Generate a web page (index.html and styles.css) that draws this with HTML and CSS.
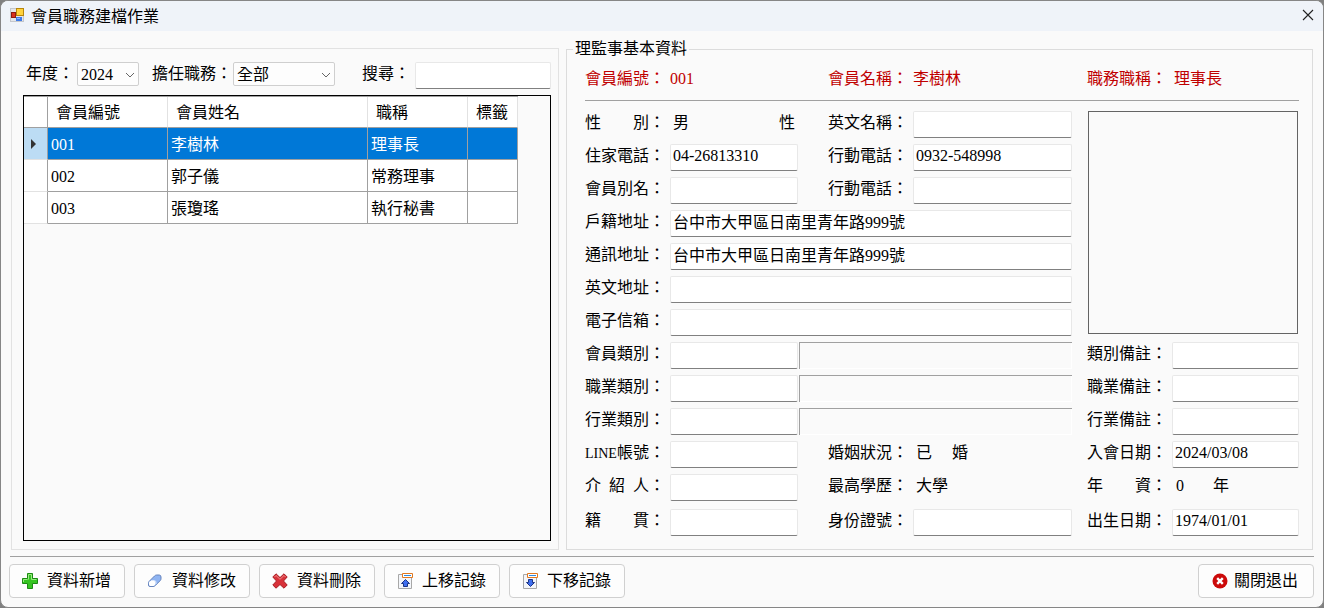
FILE: index.html
```html
<!DOCTYPE html>
<html lang="zh-Hant">
<head>
<meta charset="utf-8">
<title>會員職務建檔作業</title>
<link rel="stylesheet" href="styles.css">
</head>
<body>
<div class="window">
  <header class="titlebar">
    <svg class="app-icon" width="15" height="16" viewBox="0 0 15 16" aria-hidden="true">
      <rect x="0.5" y="1.5" width="13" height="13" fill="#e4e6ea" stroke="#c4c7cc"/>
      <rect x="6.5" y="1.5" width="7" height="7" fill="#ffd23c" stroke="#b8860b"/>
      <rect x="1.5" y="5.5" width="4" height="5" fill="#d8301e" stroke="#8c1c10"/>
      <rect x="6" y="10" width="6" height="4" fill="#3f7be8"/>
      <rect x="7" y="11" width="3" height="1" fill="#8fb6fa"/>
    </svg>
    <h1 class="title">會員職務建檔作業</h1>
    <button class="close" type="button" aria-label="關閉">
      <svg width="12" height="12" viewBox="0 0 12 12"><path d="M1 1l10 10M11 1L1 11" stroke="#222" stroke-width="1.1" fill="none"/></svg>
    </button>
  </header>

  <main class="main">
    <section class="list-panel">
      <div class="filters">
        <label for="year">年度：</label>
        <span class="combo combo-year">
          <select id="year"><option>2024</option></select>
          <svg width="10" height="6" viewBox="0 0 10 6"><path d="M1 1l4 4 4-4" stroke="#666" fill="none"/></svg>
        </span>
        <label for="duty">擔任職務：</label>
        <span class="combo combo-duty">
          <select id="duty"><option>全部</option></select>
          <svg width="10" height="6" viewBox="0 0 10 6"><path d="M1 1l4 4 4-4" stroke="#666" fill="none"/></svg>
        </span>
        <label for="search">搜尋：</label>
        <input class="field search" id="search" type="text">
      </div>
      <div class="grid-box">
        <table class="members">
          <colgroup><col class="c-mark"><col class="c-id"><col class="c-name"><col class="c-title"><col class="c-tag"></colgroup>
          <thead>
            <tr><td class="mark"></td><th scope="col">會員編號</th><th scope="col">會員姓名</th><th scope="col">職稱</th><th scope="col">標籤</th></tr>
          </thead>
          <tbody>
            <tr class="selected"><td class="mark"><svg width="6" height="10" viewBox="0 0 6 10"><path d="M0 0l5 5-5 5z" fill="#333"/></svg></td><td>001</td><td>李樹林</td><td>理事長</td><td></td></tr>
            <tr><td class="mark"></td><td>002</td><td>郭子儀</td><td>常務理事</td><td></td></tr>
            <tr><td class="mark"></td><td>003</td><td>張瓊瑤</td><td>執行秘書</td><td></td></tr>
          </tbody>
        </table>
      </div>
    </section>

    <fieldset class="detail">
      <legend>理監事基本資料</legend>
      <div class="form-cols summary">
        <span>會員編號：</span><span>001</span>
        <span class="mid">會員名稱：</span><span>李樹林</span>
        <span class="far">職務職稱：</span><span class="indent">理事長</span>
      </div>
      <hr class="rule">
      <div class="form-cols form">
        <span>性　　別：</span><span class="value spread"><span>男</span><span>性</span></span>
        <label class="mid" for="ename">英文名稱：</label><input class="field" id="ename" type="text">
        <div class="photo"></div>

        <label for="tel">住家電話：</label><input class="field" id="tel" type="text" value="04-26813310">
        <label class="mid" for="mob1">行動電話：</label><input class="field" id="mob1" type="text" value="0932-548998">

        <label for="alias">會員別名：</label><input class="field" id="alias" type="text">
        <label class="mid" for="mob2">行動電話：</label><input class="field" id="mob2" type="text">

        <label for="addr1">戶籍地址：</label><input class="field wide" id="addr1" type="text" value="台中市大甲區日南里青年路999號">
        <label for="addr2">通訊地址：</label><input class="field wide" id="addr2" type="text" value="台中市大甲區日南里青年路999號">
        <label for="addr3">英文地址：</label><input class="field wide" id="addr3" type="text">
        <label for="mail">電子信箱：</label><input class="field wide" id="mail" type="text">

        <label for="k1">會員類別：</label><input class="field" id="k1" type="text"><output class="sunken" for="k1"></output>
        <label class="far" for="n1">類別備註：</label><input class="field" id="n1" type="text">

        <label for="k2">職業類別：</label><input class="field" id="k2" type="text"><output class="sunken" for="k2"></output>
        <label class="far" for="n2">職業備註：</label><input class="field" id="n2" type="text">

        <label for="k3">行業類別：</label><input class="field" id="k3" type="text"><output class="sunken" for="k3"></output>
        <label class="far" for="n3">行業備註：</label><input class="field" id="n3" type="text">

        <label for="lineid"><span class="latin">LINE</span>帳號：</label><input class="field" id="lineid" type="text">
        <span class="mid">婚姻狀況：</span><span class="value pair"><span>已</span><span>婚</span></span>
        <label class="far" for="join">入會日期：</label><input class="field" id="join" type="text" value="2024/03/08">

        <label for="ref">介&nbsp;&nbsp;紹&nbsp;&nbsp;人：</label><input class="field" id="ref" type="text">
        <span class="mid">最高學歷：</span><span class="value">大學</span>
        <span class="far">年　　資：</span><span class="value years"><span>0</span><span>年</span></span>
      </div>
      <div class="form-cols form form-last">
        <label for="origin">籍　　貫：</label><input class="field" id="origin" type="text">
        <label class="mid" for="idno">身份證號：</label><input class="field" id="idno" type="text">
        <label class="far" for="birth">出生日期：</label><input class="field" id="birth" type="text" value="1974/01/01">
      </div>
    </fieldset>
  </main>

  <footer class="footer">
    <hr class="rule">
    <div class="actions">
      <button class="btn" type="button">
        <svg width="16" height="16" viewBox="0 0 16 16"><path d="M5.500.5h5v5h5v5h-5v5h-5v-5h-5v-5h5z" fill="#35c421" stroke="#1b8a12"/><path d="M6.500 6.500v-5h3v5h5" fill="none" stroke="#9bec83"/><path d="M1.500 9V6.500h4" fill="none" stroke="#9bec83"/></svg>
        資料新增</button>
      <button class="btn" type="button">
        <svg width="16" height="16" viewBox="0 0 16 16"><path d="M2 8.500L7.500 3q1-1 2.200-1h2.600q1.700.2 1.700 2v1.800q0 1-1 2l-5 5q-1 .7-2 .7H3Q1.500 13.500 1.500 12v-1.800Q1.500 9 2 8.500z" fill="#8fb4f2" stroke="#6684bd"/><path d="M2 9.500Q2.500 8.300 3.500 8h3.800q1.200.3 1.200 1.500V11q-.5 1.500-2 2H3.300Q2 12.800 2 11.500z" fill="#fff"/><path d="M4 7.500h3.500q1.500.3 1.500 2V11" fill="none" stroke="#dbe7fc"/></svg>
        資料修改</button>
      <button class="btn" type="button">
        <svg width="16" height="16" viewBox="0 0 16 16"><path d="M4 .8L8 4.600 12 .8 15.200 4 11.500 8l3.700 4-3.200 3.200-4-3.700-4 3.700L.8 12l3.700-4L.8 4z" fill="#d8323a" stroke="#a81c22" stroke-linejoin="round"/><path d="M2.500 4L4 2.500l4 3.800 4-3.800L13.500 4" fill="none" stroke="#f08a8a"/></svg>
        資料刪除</button>
      <button class="btn" type="button">
        <svg width="16" height="16" viewBox="0 0 16 16"><path d="M1.500 1.500h13v14h-13z" fill="#f4f6fa" stroke="#a8a8a8"/><path d="M5.500.5h10v4h-10z" fill="#fff" stroke="#e07820"/><path d="M7 2.500h7" stroke="#2d8ae0"/><path d="M8.500 6.500l4 4h-2v3h-4v-3h-2z" fill="#3f6ff0" stroke="#1c3486"/></svg>
        上移記錄</button>
      <button class="btn" type="button">
        <svg width="16" height="16" viewBox="0 0 16 16"><path d="M1.500 1.500h13v14h-13z" fill="#f4f6fa" stroke="#a8a8a8"/><path d="M5.500.5h10v4h-10z" fill="#fff" stroke="#e07820"/><path d="M7 2.500h7" stroke="#2d8ae0"/><path d="M8.500 13.500l-4-4h2v-3h4v3h2z" fill="#3f6ff0" stroke="#1c3486"/></svg>
        下移記錄</button>
      <button class="btn btn-exit" type="button">
        <svg width="16" height="16" viewBox="0 0 16 16"><circle cx="8" cy="8" r="7.500" fill="#cc0a0a"/><path d="M5.200 5.200l5.600 5.600M10.800 5.200l-5.600 5.600" stroke="#fff" stroke-width="2.400"/></svg>
        關閉退出</button>
    </div>
  </footer>
</div>
</body>
</html>
```

FILE: styles.css
```css
* { box-sizing: border-box; }

html { background: #808080; }

body {
  margin: 0;
  color: #000;
  font: 400 16px/22px "Liberation Serif", "Noto Sans CJK TC", serif;
}

input, select, button { font: inherit; color: inherit; }

.window {
  display: flex;
  flex-direction: column;
  min-height: 100vh;
  background: #fafafa;
  border: 1px solid #868686;
  border-radius: 8px;
  overflow: hidden;
}

.titlebar {
  display: flex;
  align-items: center;
  gap: 6px;
  height: 30px;
  padding: 0 9px 2px;
  background: #eff3f9;
}

.title {
  flex: 1;
  margin: 0;
  font: 400 16px/20px "Noto Sans CJK TC", sans-serif;
}

.close {
  display: flex;
  padding: 0;
  border: 0;
  background: none;
}

.main {
  flex: 1;
  display: grid;
  grid-template-columns: minmax(0, 548fr) minmax(0, 747fr);
  gap: 7px;
  padding: 7px 10px 0;
}

.list-panel {
  display: flex;
  flex-direction: column;
  gap: 6px;
  margin-top: 10px;
  padding: 13px 7px 8px 11px;
  border: 1px solid #e2e2e2;
}

.filters {
  display: flex;
  height: 27px;
  padding-left: 3px;
  line-height: 24px;
  white-space: nowrap;
}

.combo {
  position: relative;
  height: 24px;
}

.combo-year { width: 62px; margin: 0 13px 0 3px; }
.combo-duty { width: 102px; margin: 0 27px 0 1px; }

.combo select {
  appearance: none;
  width: 100%;
  height: 100%;
  padding: 0 3px;
  border: 1px solid #cfcfcf;
  border-radius: 2px;
  background: #fdfdfd;
}

.combo svg {
  position: absolute;
  right: 4px;
  top: 10px;
  pointer-events: none;
}

.field {
  width: 100%;
  min-width: 0;
  height: 27px;
  padding: 0 2px 4px;
  border: 1px solid #e8e8e8;
  border-bottom-color: #808080;
  border-radius: 2px;
  background: #fff;
}

.search { flex: 1; margin-left: 5px; }

.grid-box {
  flex: 1;
  border: 1px solid #000;
}

.members {
  table-layout: fixed;
  width: 494px;
  border-spacing: 0;
  border-top: 1px solid #a0a0a0;
  background: #fff;
}

.c-mark { width: 24px; }
.c-id { width: 120px; }
.c-name { width: 200px; }
.c-title { width: 100px; }
.c-tag { width: 50px; }

.members th, .members td {
  height: 32px;
  padding: 2px 3px 0;
  border: solid #a0a0a0;
  border-width: 0 1px 1px 0;
  text-align: left;
}

.members thead th, .members thead td { height: 31px; }

.members th {
  padding: 2px 8px 0;
  border-right-color: #e2e2e2;
  font-weight: 400;
  white-space: nowrap;
}

.members tbody .mark { border-bottom-color: #e2e2e2; }
.members .mark { padding: 0 7px; }
.members .mark svg { display: block; }

.selected { background: #0078d7; color: #fff; }
.selected .mark { background: #bcdcf4; }

.detail {
  min-width: 0;
  margin: 0;
  padding: 7px 13px 12px 18px;
  border: 1px solid #dcdcdc;
}

.detail legend {
  margin-left: -12px;
  padding: 0 2px;
}

.form-cols {
  display: grid;
  grid-template-columns: 85px minmax(0, 128fr) 115px minmax(0, 159fr) 100px minmax(0, 127fr);
  white-space: nowrap;
}

.summary { color: #c00000; line-height: 24px; }
.mid { padding-left: 30px; }
.far { padding-left: 15px; }
.indent { padding-left: 2px; }

.rule {
  height: 1px;
  margin: 0;
  border: 0;
  background: #a0a0a0;
}

.summary + .rule { margin: 9px 0 10px; }

.form { row-gap: 6px; line-height: 24px; }
.form-last { margin-top: 8px; }

.value {
  display: flex;
  padding: 0 3px;
}

.spread { justify-content: space-between; }
.pair { gap: 20px; }
.years { gap: 29px; padding-left: 4px; }

.wide {
  grid-column: 2 / 5;
  padding-bottom: 6px;
}

.sunken {
  grid-column: 3 / 5;
  margin-left: 1px;
  border: solid #a0a0a0;
  border-width: 1px 0 0 1px;
  box-shadow: inset -1px -1px #fff;
}

.photo {
  grid-column: 5 / 7;
  grid-row: 1 / 8;
  margin: 0 1px 2px 16px;
  border: 1px solid #646464;
}

.latin { font-size: 14px; }

.footer { padding: 6px 9px 9px 8px; }
.footer .rule { margin-left: 1px; }

.actions {
  display: flex;
  flex-wrap: wrap;
  gap: 9px;
  margin-top: 7px;
}

.btn {
  display: flex;
  align-items: center;
  gap: 9px;
  width: 116px;
  height: 34px;
  padding: 0 0 0 12px;
  border: 1px solid #d0d0d0;
  border-radius: 4px;
  background: #fdfdfd;
  white-space: nowrap;
}

.btn-exit {
  gap: 6px;
  margin-left: auto;
  padding-left: 13px;
}
```
